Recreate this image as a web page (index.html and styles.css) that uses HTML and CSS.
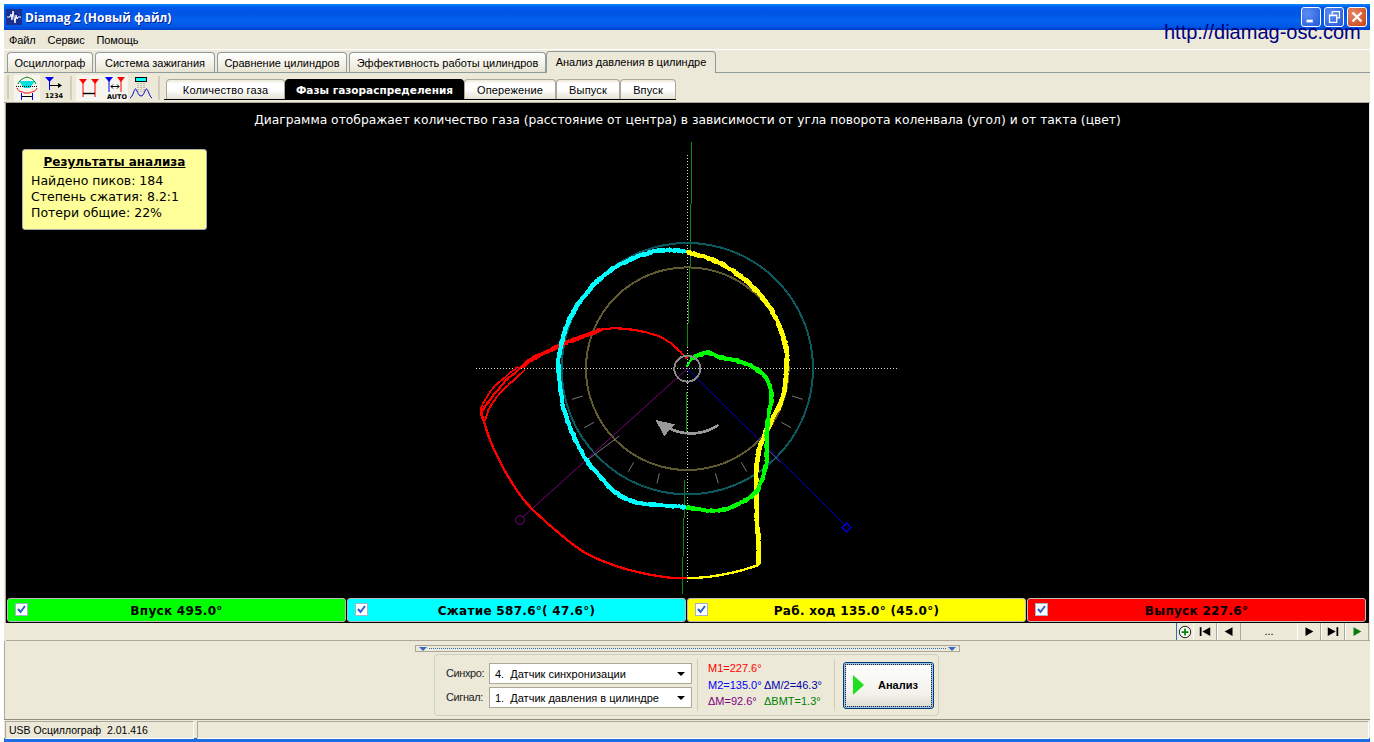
FILE: index.html
```html
<!DOCTYPE html>
<html lang="ru">
<head>
  <meta charset="UTF-8">
  <title>Diamag 2</title>
  <link rel="stylesheet" href="styles.css">
</head>
<body>
  <div class="window">
    <div class="titlebar">
      <svg class="app-icon" viewBox="0 0 16 16"><rect width="16" height="16" fill="#1c2f8f"/><path d="M1 8h3l1-3 1 6 1-9 2 12 1-8 1 4 1-2h3" fill="none" stroke="#fff"/></svg>
      <span class="app-title">Diamag 2 (Новый файл)</span>
      <div class="win-btns">
        <span class="win-btn"><svg viewBox="0 0 20 20"><rect x="5" y="13" width="7" height="3" fill="#fff"/></svg></span>
        <span class="win-btn"><svg viewBox="0 0 20 20"><path d="M8 4h8v7h-3M8 4v3M5 8h8v8H5z M5 8.500h8" fill="none" stroke="#fff" stroke-width="1.400"/></svg></span>
        <span class="win-btn close"><svg viewBox="0 0 20 20"><path d="M5 5l10 10M15 5L5 15" stroke="#fff" stroke-width="2.600"/></svg></span>
      </div>
    </div>
    <a class="site-link">http://diamag-osc.com</a>

    <div class="menu">
      <span>Файл</span><span>Сервис</span><span>Помощь</span>
    </div>

    <div class="tabs">
      <div class="tab w1">Осциллограф</div>
      <div class="tab w2">Система зажигания</div>
      <div class="tab w3">Сравнение цилиндров</div>
      <div class="tab w4">Эффективность работы цилиндров</div>
      <div class="tab w5 active">Анализ давления в цилиндре</div>
    </div>

    <div class="toolbar">
      <span class="grip"></span>
      <span class="tool on">
        <svg viewBox="0 0 24 24">
          <path d="M4 5h16l-5 7H9z" fill="#00e0e0"/>
          <path d="M3 8C5 3 9 2 12 1c3 1 7 2 9 7" fill="none" stroke="#008000"/>
          <path d="M1 10.500h22" stroke="#000" stroke-dasharray="1 1"/>
          <path d="M2 12c2 5 6 3 7 5h6c1-2 5 0 7-5" fill="none" stroke="#f00"/>
          <path d="M7 20.500h10" stroke="#000"/>
          <path d="M6.500 17v7M17.500 17v7" stroke="#00f"/>
        </svg>
      </span>
      <span class="tool">
        <svg viewBox="0 0 24 24">
          <path d="M4 1h9L8.500 6z" fill="#00f"/>
          <path d="M8.500 5v9" stroke="#00f"/>
          <path d="M9 9.500h10" stroke="#000"/>
          <path d="M17 7l4 2.500-4 2.500z" fill="#000"/>
          <text x="4" y="22" class="tool-text">1234</text>
        </svg>
      </span>
      <span class="sep"></span>
      <span class="tool on">
        <svg viewBox="0 0 24 24">
          <path d="M2 3h8L6 8zM14 3h8l-4 5z" fill="#f00"/>
          <path d="M6 7v14M18 7v14" stroke="#f00"/>
          <path d="M6 17.500h12" stroke="#000" stroke-width="1.400"/>
        </svg>
      </span>
      <span class="tool on">
        <svg viewBox="0 0 24 24">
          <path d="M2 1h8L6 6z" fill="#00f"/>
          <path d="M14 1h8l-4 5z" fill="#f00"/>
          <path d="M6 5v11" stroke="#00f"/>
          <path d="M18 5v11" stroke="#f00"/>
          <path d="M8 10.500h8M8 10.500l2-2M8 10.500l2 2M16 10.500l-2-2M16 10.500l-2 2" stroke="#000" fill="none"/>
          <text x="4" y="23" class="tool-text">AUTO</text>
        </svg>
      </span>
      <span class="tool">
        <svg viewBox="0 0 24 24">
          <rect x="6.500" y="1.500" width="11" height="4" fill="#0ff" stroke="#000"/>
          <path d="M9 7v9M12 7v9M15 7v9" stroke="#888" stroke-dasharray="1 1"/>
          <path d="M1 22c3-1 4-9 5.500-9S9 20 12 20s4-7 5.500-7 3 8 5.500 9" fill="none" stroke="#00c"/>
        </svg>
      </span>
      <span class="sep"></span>
      <div class="subtabs">
        <div class="subtab s1">Количество газа</div>
        <div class="subtab s2 selected">Фазы газораспределения</div>
        <div class="subtab s3">Опережение</div>
        <div class="subtab s4">Выпуск</div>
        <div class="subtab s5">Впуск</div>
      </div>
    </div>

    <div class="canvas">
      <svg class="plot" viewBox="0 0 1362 496">
        <path class="cross" d="M470 265.500H892"/>
        <path class="cross" d="M681.500 52V480"/>
        <path class="axis" d="M686 39L683.500 197M683 197L681 245M680.500 289L680 332M679 377L676 492"/>

        <g transform="translate(464 127) scale(.33333)">
          <circle class="teal" cx="652" cy="416" r="377"/>
          <circle class="olive" cx="652" cy="416" r="304"/>

          <path class="tick" d="M306 508L338 498M343 593L372 577M352 690L448 618M475 725L491 697M561 760L568 730M736 730L745 760M814 697L830 725M895 660L930 695M934 577L963 593M966 498L998 508"/>

          <path class="purple" d="M652 416L160 860"/>
          <circle class="purple" cx="150" cy="870" r="13"/>
          <path class="blue" d="M652 416L1130 890"/>

          <path class="arrow" d="M745 585C705 612 650 622 590 592"/>
          <path class="arrow-head" d="M556 570L615 583L583 618z"/>

          <g id="traces"></g>
          <circle class="hub" cx="652" cy="416" r="39"/>
        </g>
        <path class="blue-mark" d="M836 424.500l4.500-4.500 4.500 4.500-4.500 4.500z"/>
      </svg>

      <div class="caption">Диаграмма отображает количество газа (расстояние от центра) в зависимости от угла поворота коленвала (угол) и от такта (цвет)</div>

      <div class="results">
        <div class="results-title">Результаты анализа</div>
        <div>Найдено пиков: 184</div>
        <div>Степень сжатия: 8.2:1</div>
        <div>Потери общие: 22%</div>
      </div>

      <div class="legend">
        <div class="stroke green"><span class="check"><svg viewBox="0 0 11 11"><path d="M2 5l2.500 3L9 2"/></svg></span><span class="stroke-name">Впуск 495.0°</span></div>
        <div class="stroke cyan"><span class="check"><svg viewBox="0 0 11 11"><path d="M2 5l2.500 3L9 2"/></svg></span><span class="stroke-name">Сжатие 587.6°( 47.6°)</span></div>
        <div class="stroke yellow"><span class="check"><svg viewBox="0 0 11 11"><path d="M2 5l2.500 3L9 2"/></svg></span><span class="stroke-name">Раб. ход 135.0° (45.0°)</span></div>
        <div class="stroke red"><span class="check"><svg viewBox="0 0 11 11"><path d="M2 5l2.500 3L9 2"/></svg></span><span class="stroke-name">Выпуск 227.6°</span></div>
      </div>
    </div>

    <div class="nav">
      <span class="nav-plus"><svg viewBox="0 0 16 16"><circle cx="8" cy="8" r="6.500" fill="#fff" stroke="#000"/><path d="M8 4v8M4 8h8" stroke="#080" stroke-width="2"/></svg></span>
      <span class="nav-btn"><svg viewBox="0 0 16 10"><path d="M2 0h2v10H2zM14 0v10L5 5z"/></svg></span>
      <span class="nav-btn"><svg viewBox="0 0 16 10"><path d="M12 0v10L3 5z"/></svg></span>
      <span class="nav-dots">...</span>
      <span class="nav-btn"><svg viewBox="0 0 16 10"><path d="M4 0v10l9-5z"/></svg></span>
      <span class="nav-btn"><svg viewBox="0 0 16 10"><path d="M2 0v10l9-5zM12 0h2v10h-2z"/></svg></span>
      <span class="nav-btn"><svg viewBox="0 0 16 10"><path d="M4 0v10l9-5z" fill="#0a7a0a"/></svg></span>
    </div>

    <div class="bottom">
      <div class="splitter"><i class="tri"></i><span class="dots"></span><i class="tri"></i></div>
      <div class="panel">
        <div class="selectors">
          <div class="field"><label>Синхро:</label><div class="combo">4.&nbsp; Датчик синхронизации</div></div>
          <div class="field"><label>Сигнал:</label><div class="combo">1.&nbsp; Датчик давления в цилиндре</div></div>
        </div>
        <div class="values">
          <div class="val-red">M1=227.6°</div>
          <div class="val-row"><span class="val-blue">M2=135.0°</span><span class="val-navy">ΔM/2=46.3°</span></div>
          <div class="val-row"><span class="val-purple">ΔM=92.6°</span><span class="val-green">ΔBMT=1.3°</span></div>
        </div>
        <div class="run-wrap">
          <div class="run"><i class="run-tri"></i><span>Анализ</span></div>
        </div>
      </div>
    </div>

    <div class="status">
      <div class="status-a">USB Осциллограф&nbsp; 2.01.416</div>
      <div class="status-b"></div>
    </div>
  </div>
  <script src="plot.js"></script>
</body>
</html>
```

FILE: styles.css
```css
* { box-sizing: border-box; }

body {
  margin: 0;
  background: #fff;
  height: 742px;
  overflow: hidden;
  font-family: "Liberation Sans", Arial, sans-serif;
  font-size: 11px;
  color: #000;
}

.window {
  position: relative;
  margin: 4px 4px 0;
  height: 738px;
  display: flex;
  flex-direction: column;
  background: #ece9d8;
  border-bottom: 4px solid #1c6ee0;
}

.titlebar {
  height: 26px;
  flex: none;
  display: flex;
  align-items: center;
  padding-left: 2px;
  background: linear-gradient(#0a8cf5 0, #0058ee 3px, #0054e3 10px, #0462f2 17px, #0058e6 22px, #0040cc 26px);
}
.app-icon { width: 16px; height: 16px; margin-right: 3px; flex: none; }
.app-title {
  color: #fff;
  font: bold 12px "Open Sans", sans-serif;
  text-shadow: 1px 1px #0a1f8f;
}
.win-btns { margin-left: auto; margin-right: 3px; display: flex; gap: 3px; }
.win-btn {
  width: 20px;
  height: 20px;
  border: 1px solid #fff;
  border-radius: 3px;
  background: radial-gradient(circle at 30% 30%, #5c8df5, #2257d8);
}
.win-btn svg { display: block; width: 18px; height: 18px; }
.win-btn.close { background: radial-gradient(circle at 30% 30%, #e8876a, #c8400f); }

.site-link {
  position: absolute;
  top: 17px;
  left: 1160px;
  color: #000080;
  font: 20px "Liberation Sans", sans-serif;
}

.menu {
  height: 20px;
  flex: none;
  display: flex;
  align-items: center;
  gap: 12px;
  padding-left: 5px;
  letter-spacing: -.12px;
  border-bottom: 1px solid #fff;
}

.tabs {
  height: 23px;
  flex: none;
  display: flex;
  align-items: flex-end;
  padding-left: 3px;
  border-bottom: 1px solid #919b9c;
  gap: 2px;
}
.tab {
  height: 20px;
  display: flex;
  align-items: center;
  justify-content: center;
  border: 1px solid #919b9c;
  border-bottom: none;
  border-radius: 4px 4px 0 0;
  background: linear-gradient(#fff, #f3f1e6 60%, #e6e3d2);
}
.tab.active {
  height: 22px;
  margin-left: -2px;
  margin-bottom: -1px;
  background: #ece9d8;
  padding-bottom: 2px;
}
.w1 { width: 86px; }
.w2 { width: 120px; }
.w3 { width: 130px; }
.w4 { width: 197px; }
.w5 { width: 170px; }

.toolbar {
  height: 30px;
  flex: none;
  display: flex;
  align-items: flex-start;
  padding-left: 3px;
  border-bottom: 1px solid #aca899;
}
.grip {
  width: 2px;
  height: 24px;
  margin: 2px 5px 0 0;
  background: #d0cdbc;
}
.tool {
  width: 26px;
  height: 26px;
  margin-top: 2px;
  display: flex;
  align-items: center;
  justify-content: center;
}
.tool svg { width: 24px; height: 24px; }
.tool.on {
  background-color: #f6f5ee;
  background-image: radial-gradient(#e4e1d2 .6px, transparent .7px);
  background-size: 2px 2px;
}
.tool-text { font: bold 6.500px "DejaVu Sans", sans-serif; fill: #000; }
.sep {
  width: 2px;
  height: 24px;
  margin: 3px 4px 0;
  background: #d0cdbc;
}
.subtabs {
  display: flex;
  margin: 6px 0 0;
  padding-left: 2px;
  height: 21px;
  border-bottom: 1px solid #000;
}
.subtab {
  height: 20px;
  display: flex;
  align-items: center;
  justify-content: center;
  border: 1px solid #aca899;
  border-bottom: none;
  border-radius: 4px 4px 0 0;
  background: linear-gradient(#ece9d8, #fff 20%, #fff 50%, #e4e2d6);
  letter-spacing: .15px;
}
.subtab.selected {
  background: #000;
  border-color: #000;
  color: #fff;
  letter-spacing: 0;
  font: bold 10.500px "DejaVu Sans", sans-serif;
}
.s1 { width: 119px; }
.s2 { width: 179px; }
.s3 { width: 92px; }
.s4 { width: 64px; }
.s5 { width: 56px; }

.canvas {
  position: relative;
  height: 520px;
  flex: none;
  margin: 0 1px 0 2px;
  background: #000;
  box-shadow: -1px 0 #aca899;
}
.plot { position: absolute; left: 0; top: 0; width: 1362px; height: 496px; shape-rendering: crispEdges; }
.plot * { fill: none; }
.plot path, .plot circle { stroke-linejoin: round; }
.cross { stroke: #ddd; stroke-width: 1; stroke-dasharray: 1 2; }
.axis { stroke: #0a8a0a; stroke-width: 1; }
.teal { stroke: #0a5a5f; stroke-width: 6; }
.olive { stroke: #5f5a2f; stroke-width: 6; }
.tick { stroke: #777; stroke-width: 3; }
.purple { stroke: #800080; stroke-width: 3; }
.blue { stroke: #0000d0; stroke-width: 3; }
.plot .blue-mark { stroke: #0000d0; stroke-width: 1; }
.hub { stroke: #888; stroke-width: 6; }
.arrow { stroke: #999; stroke-width: 8; }
.plot .arrow-head { fill: #999; }

.caption {
  position: absolute;
  left: 0;
  right: 0;
  top: 10px;
  text-align: center;
  color: #fff;
  font: 12.300px "DejaVu Sans", sans-serif;
}

.results {
  position: absolute;
  left: 16px;
  top: 46px;
  width: 185px;
  height: 81px;
  padding: 4px 8px;
  background: #ffff99;
  border: 1px solid #aaa;
  border-radius: 3px;
  font: 12.500px/16px "DejaVu Sans", sans-serif;
}
.results-title {
  font-size: 12px;
  font-weight: bold;
  text-decoration: underline;
  text-align: center;
  margin-bottom: 3px;
}

.legend {
  position: absolute;
  left: 1px;
  right: 3px;
  bottom: 1px;
  height: 24px;
  display: flex;
  gap: 1px;
}
.stroke {
  flex: 1;
  display: flex;
  align-items: center;
  position: relative;
  border: 1px solid #bbb;
  border-radius: 3px;
  padding-top: 2px;
  font: bold 12px "DejaVu Sans", sans-serif;
  letter-spacing: .3px;
}
.stroke-name { flex: 1; text-align: center; }
.green { background: #0f0; }
.cyan { background: #0ff; }
.yellow { background: #ff0; }
.red { background: #f00; }
.check {
  position: absolute;
  left: 7px;
  top: 4px;
  width: 13px;
  height: 13px;
  background: #fff;
  border: 1px solid #a0b4c8;
}
.check svg { display: block; width: 11px; height: 11px; }
.check path { fill: none; stroke: #2a5fd0; stroke-width: 2; }

.nav {
  height: 18px;
  flex: none;
  margin-left: 2px;
  display: flex;
  justify-content: flex-end;
  padding-right: 1px;
  border-bottom: 1px solid #aca899;
}
.nav-plus {
  width: 17px;
  border-left: 1px solid #316ac5;
  display: flex;
  align-items: center;
  justify-content: center;
}
.nav-plus svg { width: 14px; height: 14px; }
.nav-btn {
  width: 24px;
  display: flex;
  align-items: center;
  justify-content: center;
  border-left: 1px solid #fff;
  border-right: 1px solid #aca899;
}
.nav-btn svg { width: 14px; height: 9px; }
.nav-dots { width: 56px; text-align: center; line-height: 17px; }

.bottom {
  height: 79px;
  flex: none;
  display: flex;
  flex-direction: column;
  align-items: center;
  padding-top: 4px;
  border-bottom: 1px solid #918e80;
  box-shadow: inset 1px 0 #aca899;
}
.splitter {
  width: 545px;
  height: 7px;
  flex: none;
  margin-left: 1px;
  display: flex;
  align-items: center;
  gap: 2px;
  padding: 0 3px;
  border: 1px solid #aca899;
}
.dots { flex: 1; border-top: 1px dotted #316ac5; }
.tri {
  width: 0;
  height: 0;
  border: 4px solid transparent;
  border-top: 4px solid #316ac5;
  border-bottom: 0;
}
.panel {
  width: 505px;
  height: 62px;
  margin: 2px 0 0 -1px;
  display: flex;
  align-items: center;
  border: 1px solid #d4d0c0;
  border-radius: 4px;
}
.selectors {
  display: flex;
  flex-direction: column;
  gap: 3px;
  padding: 0 5px 0 11px;
}
.field { display: flex; align-items: center; gap: 5px; }
.field label { width: 38px; color: #222; letter-spacing: -.4px; }
.combo {
  position: relative;
  width: 203px;
  height: 21px;
  padding: 4px 0 0 5px;
  background: #fff;
  border: 1px solid #aca899;
}
.combo::after {
  content: "";
  position: absolute;
  right: 6px;
  top: 8px;
  border: 4px solid transparent;
  border-top: 4px solid #000;
  border-bottom: 0;
}
.values {
  width: 138px;
  height: 52px;
  padding: 1px 0 0 10px;
  line-height: 16.500px;
  border-left: 1px solid #cfccbc;
  border-right: 1px solid #cfccbc;
  white-space: nowrap;
}
.val-row { display: flex; }
.val-row span:first-child { width: 56px; }
.val-red { color: #f00; }
.val-blue { color: #00f; }
.val-navy { color: #00a; }
.val-purple { color: #800080; }
.val-green { color: #008000; }
.run-wrap { padding-left: 8px; }
.run {
  width: 91px;
  height: 47px;
  display: flex;
  align-items: center;
  border: 1px solid #003c74;
  border-radius: 3px;
  outline: 1px dotted #222;
  outline-offset: -3px;
  box-shadow: inset 0 0 0 2px #9cc0ea;
  background: linear-gradient(#fff, #f2f1ea 70%, #dcd9cc);
  font-weight: bold;
}
.run-tri {
  width: 0;
  height: 0;
  margin: 0 14px 0 9px;
  border-left: 11px solid #1fe01f;
  border-top: 10px solid transparent;
  border-bottom: 10px solid transparent;
}

.status {
  flex: 1;
  display: flex;
  gap: 3px;
  padding: 1px 1px 0 1px;
}
.status-a, .status-b {
  border-left: 1px solid #aca899;
  border-top: 1px solid #aca899;
  border-right: 1px solid #fff;
  border-bottom: 1px solid #fff;
  padding: 2px 3px;
  font-size: 10.500px;
  white-space: nowrap;
}
.status-a { width: 189px; }
.status-b { flex: 1; }
```

FILE: plot.js
```js
// traces of the gas diagram, points in 1/3 px around the plot group
var traces = [
  { color: "#f00", width: 5, passes: 3, spread: 3, pts: [[650,385],[620,355],[580,325],[530,308],[480,298],[430,295],[390,300]] },
  { color: "#f00", width: 9, passes: 4, spread: 6, pts: [[390,300],[350,315],[310,330],[275,345],[230,365],[190,385],[155,410]] },
  { color: "#f00", width: 6, passes: 2, spread: 3, pts: [[155,410],[110,450],[75,490],[45,530],[35,550],[42,575]] },
  { color: "#f00", width: 5, passes: 2, spread: 3, pts: [[165,420],[125,455],[90,490],[60,530],[48,560],[42,575]] },
  { color: "#f00", width: 5, passes: 1, spread: 2, pts: [[145,410],[100,445],[65,480],[40,520],[32,545],[38,565]] },
  { color: "#f00", width: 7, passes: 1, spread: 0, pts: [[42,575],[60,630],[95,705],[140,780],[180,830],[250,895],[340,965],[430,1005],[520,1030],[600,1043],[650,1045]] },
  { color: "#0ff", width: 9, passes: 5, spread: 7, pts: [[650,65],[600,60],[550,65],[490,85],[430,115],[380,155],[330,215],[295,275],[275,340],[265,400],[270,470],[285,550],[310,615],[350,690],[395,745],[440,790],[490,815],[560,825],[650,832]] },
  { color: "#ff0", width: 10, passes: 5, spread: 7, pts: [[652,67],[700,80],[760,105],[820,145],[870,195],[915,260],[945,340],[950,420],[935,510],[900,580],[870,650],[860,720],[860,800],[860,860],[866,940],[866,1005]] },
  { color: "#ff0", width: 7, passes: 1, spread: 0, pts: [[866,1005],[800,1025],[720,1040],[650,1045]] },
  { color: "#0f0", width: 9, passes: 5, spread: 7, pts: [[665,385],[690,375],[715,368],[750,382],[800,392],[850,412],[885,440],[905,490],[895,560],[890,620],[890,690],[875,750],[850,795],[800,825],[740,842],[690,838],[650,832]] },
  { color: "#0f0", width: 6, passes: 1, spread: 0, pts: [[650,410],[665,385]] }
];

var seed = 7;
function rnd() {
  seed = (seed * 16807) % 2147483647;
  return seed / 2147483647 - 0.5;
}

// catmull-rom between the points, with a little noise on every sample
function line(pts, spread) {
  var d = "";
  for (var i = 0; i < pts.length - 1; i++) {
    var p0 = pts[Math.max(i - 1, 0)], p1 = pts[i], p2 = pts[i + 1], p3 = pts[Math.min(i + 2, pts.length - 1)];
    for (var s = 0; s < 6; s++) {
      var t = s / 6, t2 = t * t, t3 = t2 * t;
      var x = 0.5 * (2 * p1[0] + (p2[0] - p0[0]) * t + (2 * p0[0] - 5 * p1[0] + 4 * p2[0] - p3[0]) * t2 + (3 * p1[0] - p0[0] - 3 * p2[0] + p3[0]) * t3);
      var y = 0.5 * (2 * p1[1] + (p2[1] - p0[1]) * t + (2 * p0[1] - 5 * p1[1] + 4 * p2[1] - p3[1]) * t2 + (3 * p1[1] - p0[1] - 3 * p2[1] + p3[1]) * t3);
      d += (d ? "L" : "M") + (x + rnd() * spread).toFixed(1) + " " + (y + rnd() * spread).toFixed(1);
    }
  }
  var last = pts[pts.length - 1];
  return d + "L" + last[0] + " " + last[1];
}

var holder = document.getElementById("traces");
traces.forEach(function (tr) {
  for (var n = 0; n < tr.passes; n++) {
    var el = document.createElementNS("http://www.w3.org/2000/svg", "path");
    el.setAttribute("d", line(tr.pts, tr.spread));
    el.style.stroke = tr.color;
    el.style.strokeWidth = tr.width;
    holder.appendChild(el);
  }
});
```
